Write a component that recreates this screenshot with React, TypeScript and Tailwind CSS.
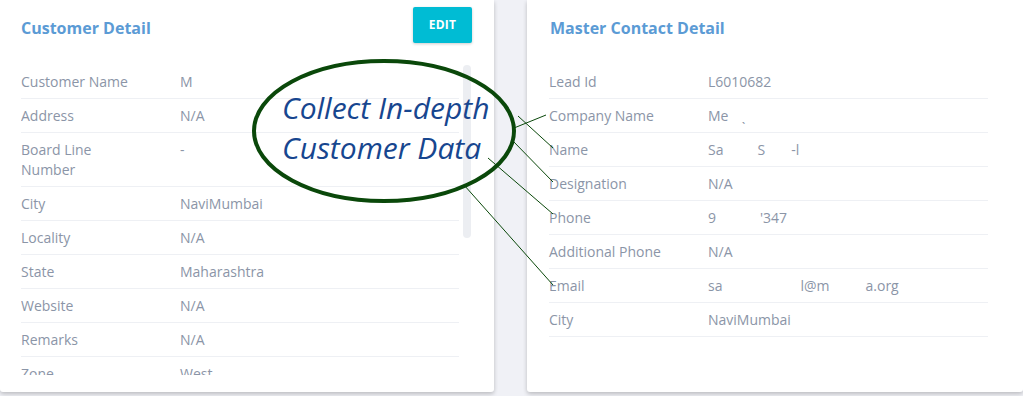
import React from "react";

type Row = { label: string; value: React.ReactNode };

const customerRows: Row[] = [
  { label: "Customer Name", value: "M" },
  { label: "Address", value: "N/A" },
  { label: "Board Line Number", value: "-" },
  { label: "City", value: "NaviMumbai" },
  { label: "Locality", value: "N/A" },
  { label: "State", value: "Maharashtra" },
  { label: "Website", value: "N/A" },
  { label: "Remarks", value: "N/A" },
  { label: "Zone", value: "West" },
];

const contactRows: Row[] = [
  { label: "Lead Id", value: "L6010682" },
  {
    label: "Company Name",
    value: (
      <>
        Me<span className="ml-[13px]">ˎ</span>
      </>
    ),
  },
  {
    label: "Name",
    value: (
      <>
        Sa<span className="ml-[34px]">S</span>
        <span className="ml-[26px]">-l</span>
      </>
    ),
  },
  { label: "Designation", value: "N/A" },
  {
    label: "Phone",
    value: (
      <>
        9<span className="ml-[44px]">&apos;347</span>
      </>
    ),
  },
  { label: "Additional Phone", value: "N/A" },
  {
    label: "Email",
    value: (
      <>
        sa<span className="ml-[78px]">l@m</span>
        <span className="ml-[36px]">a.org</span>
      </>
    ),
  },
  { label: "City", value: "NaviMumbai" },
];

const DetailRow = ({ label, value }: Row) => {
  return (
    <div className="grid grid-cols-[159px_1fr] border-b border-[#eef0f4] pb-[6px] pt-[7px] text-[14px] leading-[20px] text-[#8b95a7]">
      <span className="max-w-[120px]">{label}</span>
      <span className="whitespace-nowrap">{value}</span>
    </div>
  );
};

const CustomerCard = () => {
  return (
    <div className="flex h-[392px] w-[494px] shrink-0 flex-col rounded-b-[3px] bg-white pl-[21px] pr-[22px] shadow-[0_2px_4px_rgba(0,0,0,0.22)]">
      <div className="flex h-[65px] items-start justify-between">
        <h2 className="mt-[17px] text-[16px] font-bold leading-[22px] text-[#5b9bd5]">
          Customer Detail
        </h2>
        <button className="mt-[7px] h-[36px] w-[59px] rounded-[2px] bg-[#00bcd4] text-[12px] font-bold tracking-[0.3px] text-white shadow-[0_1px_3px_rgba(0,0,0,0.2)]">
          EDIT
        </button>
      </div>
      <div className="flex h-[310px]">
        <div className="w-[438px] overflow-hidden">
          {customerRows.map((r) => (
            <DetailRow key={r.label} {...r} />
          ))}
        </div>
        <div className="ml-[4px] w-[8px]">
          <div className="h-[173px] rounded-[4px] bg-[#eceef2]" />
        </div>
      </div>
    </div>
  );
};

const ContactCard = () => {
  return (
    <div className="flex h-[392px] flex-1 flex-col rounded-b-[3px] bg-white pl-[22px] shadow-[0_2px_4px_rgba(0,0,0,0.22)]">
      <div className="flex h-[65px] items-start">
        <h2 className="ml-[1px] mt-[17px] text-[16px] font-bold leading-[22px] text-[#5b9bd5]">
          Master Contact Detail
        </h2>
      </div>
      <div className="w-[439px]">
        {contactRows.map((r) => (
          <DetailRow key={r.label} {...r} />
        ))}
      </div>
    </div>
  );
};

export default function App() {
  return (
    <div className="relative h-[396px] w-[1023px] overflow-hidden bg-[#f0f1f6] font-['Open_Sans',sans-serif]">
      <div className="flex gap-[33px]">
        <CustomerCard />
        <ContactCard />
      </div>

      {/* callout drawn over the cards */}
      <svg
        className="pointer-events-none absolute left-0 top-0"
        width="1023"
        height="396"
        viewBox="0 0 1023 396"
      >
        <ellipse cx="384" cy="131" rx="130" ry="70" fill="none" stroke="#0a480a" strokeWidth="4" />
        <g stroke="#0a480a" strokeWidth="1">
          <line x1="514" y1="128" x2="546" y2="115" />
          <line x1="518" y1="116" x2="553" y2="148" />
          <line x1="512" y1="140" x2="553" y2="182" />
          <line x1="488" y1="158" x2="553" y2="214" />
          <line x1="464" y1="185" x2="553" y2="285" />
        </g>
      </svg>
      <div className="pointer-events-none absolute left-[282px] top-[88px] text-[30px] italic leading-[40px] text-[#17468f]">
        <p>Collect In-depth</p>
        <p>Customer Data</p>
      </div>
    </div>
  );
}
